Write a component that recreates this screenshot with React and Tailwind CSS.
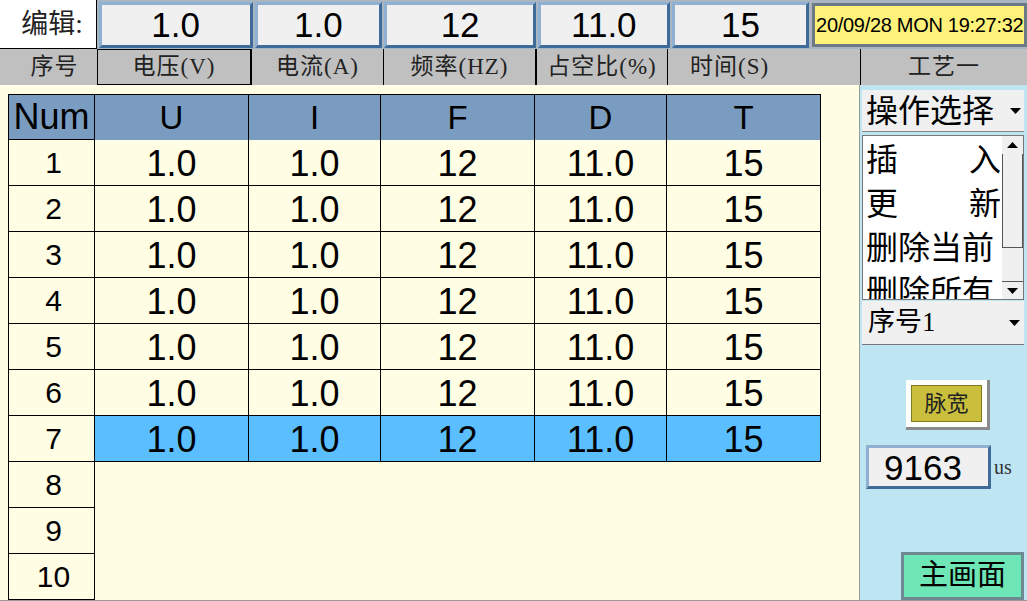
const rows = [1, 2, 3, 4, 5, 6, 7, 8, 9, 10];
const data = { U: "1.0", I: "1.0", F: "12", D: "11.0", T: "15" };
const cols = [
  { key: "U", w: "w-[154px]" },
  { key: "I", w: "w-[132px]" },
  { key: "F", w: "w-[154px]" },
  { key: "D", w: "w-[132px]" },
  { key: "T", w: "w-[154px]" },
];

const serif = "font-['Liberation_Serif','Noto_Sans_CJK_SC',serif]";
const sans = "font-['Liberation_Sans',Arial,sans-serif]";

function EditBox({ value, w }) {
  return (
    <div
      className={`${w} h-[46px] flex items-center justify-center bg-[#f0f0f0] border-[3px] border-t-[#8fb0d0] border-l-[#8fb0d0] border-r-[#3f6b98] border-b-[#3f6b98] text-[35px] leading-none text-black ${sans}`}
    >
      {value}
    </div>
  );
}

function Arrow({ up }) {
  return (
    <svg width="11" height="6" viewBox="0 0 11 6">
      <path d={up ? "M0 6 L5.5 0 L11 6 Z" : "M0 0 L11 0 L5.5 6 Z"} fill="#000" />
    </svg>
  );
}

export default function App() {
  return (
    <div className="w-[1027px] h-[601px] overflow-hidden bg-[#c0c0c0] flex flex-col">
      {/* top edit row */}
      <div className="h-[49px] flex items-center gap-[2px] bg-[#a9b6c2]">
        <div
          className={`w-[97px] h-[49px] bg-white border-r border-b border-black flex items-center justify-center pl-[8px] text-[27px] text-[#222] ${serif}`}
        >
          编辑:
        </div>
        <EditBox value="1.0" w="w-[154px]" />
        <EditBox value="1.0" w="w-[128px]" />
        <EditBox value="12" w="w-[152px]" />
        <EditBox value="11.0" w="w-[132px]" />
        <EditBox value="15" w="w-[138px]" />
        <div className="ml-[1px] w-[215px] h-[44px] bg-[#fff27a] border-[3px] border-[#6d7a85] flex items-center justify-center overflow-hidden">
          <span className={`text-[20px] tracking-[-0.3px] whitespace-nowrap text-black ${sans}`}>
            20/09/28 MON 19:27:32
          </span>
        </div>
      </div>

      {/* header strip */}
      <div className={`h-[37px] flex bg-[#c0c0c0] text-[23px] tracking-[1px] text-[#222] ${serif}`}>
        <div className="w-[97px] flex items-center justify-center pl-[12px]">序号</div>
        <div className="w-[154px] h-[36px] border border-black flex items-center justify-center">
          电压(V)
        </div>
        <div className="w-[132px] border-l border-black flex items-center justify-center">
          电流(A)
        </div>
        <div className="w-[152px] border-l border-black flex items-center justify-center">
          频率(HZ)
        </div>
        <div className="w-[132px] border-l-2 border-black flex items-center justify-center">
          占空比(%)
        </div>
        <div className="w-[193px] border-l border-black flex items-center pl-[22px]">
          时间(S)
        </div>
        <div className="flex-1 border-l border-black flex items-center justify-center">
          工艺一
        </div>
      </div>

      {/* body */}
      <div className="flex-1 flex border-b-2 border-[#9a9a9a]">
        <div className="w-[859px] bg-[#fffde3] pt-[9px] pl-[8px]">
          <div className={`flex flex-col ${sans}`}>
            <div className="flex h-[46px]">
              <div className="w-[87px] bg-[#7b9cc1] border border-black flex items-center justify-center text-[36px] leading-none">
                Num
              </div>
              {cols.map((c) => (
                <div
                  key={c.key}
                  className={`${c.w} bg-[#7b9cc1] border-t border-r border-black flex items-center justify-center text-[33px] leading-none`}
                >
                  {c.key}
                </div>
              ))}
            </div>
            {rows.map((n) => (
              <div key={n} className="flex h-[46px]">
                <div className="w-[87px] border-l border-r border-b border-black flex items-center justify-center pl-[4px] text-[30px] leading-none">
                  {n}
                </div>
                {n <= 7 &&
                  cols.map((c) => (
                    <div
                      key={c.key}
                      className={`${c.w} ${n === 7 ? "bg-[#5bbfff]" : ""} border-r border-b border-black flex items-center justify-center pt-[2px] text-[36px] leading-none`}
                    >
                      {data[c.key]}
                    </div>
                  ))}
              </div>
            ))}
          </div>
        </div>

        {/* right panel */}
        <div className={`flex-1 bg-[#bde6f2] border-l border-[#9a9a9a] flex flex-col pl-[2px] pr-[3px] ${serif}`}>
          <div className="mt-[5px] h-[42px] bg-[#f0f0f0] border-b border-[#888] flex items-center justify-between pl-[4px] pr-[3px]">
            <span className="text-[32px] leading-none text-black">操作选择</span>
            <Arrow />
          </div>
          <div className="mt-[3px] h-[165px] bg-white border border-[#777] flex overflow-hidden">
            <div className="flex-1 flex flex-col pl-[3px] pr-[1px] pt-[2px] text-[32px] leading-[44px] text-black">
              <div className="flex justify-between">
                <span>插</span>
                <span>入</span>
              </div>
              <div className="flex justify-between">
                <span>更</span>
                <span>新</span>
              </div>
              <div className="whitespace-nowrap">删除当前</div>
              <div className="whitespace-nowrap">删除所有</div>
            </div>
            <div className="w-[21px] bg-[#f0f0f0] flex flex-col">
              <div className="h-[18px] flex items-center justify-center">
                <Arrow up />
              </div>
              <div className="h-[94px] bg-[#f0f0f0] border border-[#555] border-t-0" />
              <div className="flex-1" />
              <div className="h-[18px] flex items-center justify-center border-t border-[#555]">
                <Arrow />
              </div>
            </div>
          </div>
          <div className="mt-[1px] h-[44px] bg-[#f0f0f0] border-b border-[#777] flex items-center justify-between pl-[6px] pr-[4px]">
            <span className="text-[27px] leading-none text-black">序号1</span>
            <Arrow />
          </div>

          <div className="mt-[35px] ml-[44px] w-[84px] h-[50px] bg-white border-r-[3px] border-b-[3px] border-[#8a8a8a] p-[5px]">
            <div className="w-full h-full bg-[#c9bf3c] border border-[#7f7a20] flex items-center justify-center text-[22px] text-[#222]">
              脉宽
            </div>
          </div>

          <div className="mt-[15px] flex items-center">
            <div
              className={`ml-[4px] w-[125px] h-[44px] bg-[#f0f0f0] border-[3px] border-t-[#8fb0d0] border-l-[#8fb0d0] border-r-[#3f6b98] border-b-[#3f6b98] flex items-center pl-[15px] text-[35px] leading-none text-black ${sans}`}
            >
              9163
            </div>
            <span className="ml-[3px] text-[20px] text-[#333]">us</span>
          </div>

          <div className="flex-1" />
          <div className="self-end w-[123px] h-[48px] bg-[#6fe6b5] border-[3px] border-[#6d8a92] flex items-center justify-center text-[29px] text-black">
            主画面
          </div>
        </div>
      </div>
    </div>
  );
}
